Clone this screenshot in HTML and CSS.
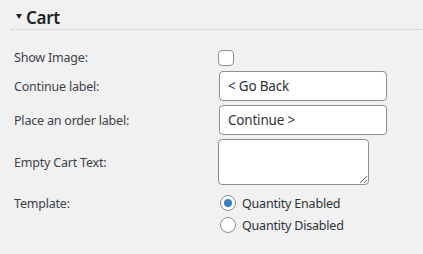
FILE: index.html
```html
<!DOCTYPE html>
<html lang="en">
<head>
    <meta charset="UTF-8">
    <meta name="viewport" content="width=device-width, initial-scale=1.0">
    <title>Cart Settings</title>
    <link rel="stylesheet" href="styles.css">
</head>
<body>
    <div class="settings">
        <!-- Section title -->
        <h3 class="section-title">
            <svg class="caret" width="6" height="5" viewBox="0 0 6 5"><polygon points="0,0 6,0 3,5" fill="#1d2327"/></svg>
            Cart
        </h3>

        <div class="rows">
            <div class="row row-check">
                <label class="row-label" for="show-image">Show Image:</label>
                <input type="checkbox" id="show-image" class="check">
            </div>

            <div class="row row-input">
                <label class="row-label" for="continue-label">Continue label:</label>
                <input type="text" id="continue-label" class="text-input" value="< Go Back">
            </div>

            <div class="row row-input">
                <label class="row-label" for="order-label">Place an order label:</label>
                <input type="text" id="order-label" class="text-input" value="Continue >">
            </div>

            <div class="row row-area">
                <label class="row-label" for="empty-text">Empty Cart Text:</label>
                <textarea id="empty-text" class="text-area"></textarea>
            </div>

            <div class="row row-radio">
                <span class="row-label">Template:</span>
                <div class="radio-group">
                    <label class="radio-item"><input type="radio" name="template" class="radio" checked> Quantity Enabled</label>
                    <label class="radio-item"><input type="radio" name="template" class="radio"> Quantity Disabled</label>
                </div>
            </div>
        </div>
    </div>
</body>
</html>
```

FILE: styles.css
```css
/* General Reset */
* {
    margin: 0;
    padding: 0;
    box-sizing: border-box;
}

body {
    font-family: 'Noto Sans', 'Open Sans', sans-serif;
    font-size: 12.5px;
    letter-spacing: -0.2px;
    background-color: #f1f1f1;
    color: #3c434a;
}

.settings {
    padding-top: 5px;
}

.section-title {
    display: flex;
    align-items: center;
    margin-left: 11px;
    padding-left: 5px;
    height: 25px;
    font-size: 17px;
    font-weight: 600;
    letter-spacing: -0.3px;
    color: #1d2327;
    border-bottom: 1px dotted #c3c4c7;
}

.caret {
    margin-right: 4px;
    margin-top: -1px;
}

.rows {
    padding-left: 14px;
    padding-top: 19px;
}

.row {
    display: flex;
    align-items: center;
}

.row-label {
    width: 204px;
    flex-shrink: 0;
}

.row-input {
    margin-top: 5px;
}

.row-input + .row-input {
    margin-top: 4px;
}

.row-area {
    margin-top: 4px;
}

.row-radio {
    margin-top: 10px;
    align-items: flex-start;
}

.row-radio .row-label {
    line-height: 18px;
}

.check {
    appearance: none;
    width: 16px;
    height: 16px;
    border: 1px solid #8c8f94;
    border-radius: 4px;
    background: #fff;
}

.text-input {
    width: 168px;
    height: 30px;
    margin-left: 1px;
    padding: 0 8px;
    border: 1px solid #8c8f94;
    border-radius: 4px;
    background: #fff;
    font-family: inherit;
    font-size: 13.5px;
    letter-spacing: -0.2px;
    color: #2c3338;
}

.text-area {
    width: 151px;
    height: 46px;
    padding: 2px 6px;
    border: 1px solid #8c8f94;
    border-radius: 4px;
    background: #fff;
    font-family: inherit;
    font-size: 14px;
    color: #2c3338;
}

.radio-group {
    display: flex;
    flex-direction: column;
    gap: 6px;
    margin-left: 2px;
}

.radio-item {
    display: flex;
    align-items: center;
    gap: 6px;
    height: 16px;
    line-height: 18px;
    padding-top: 1px;
    color: #2c3338;
}

.radio {
    appearance: none;
    flex-shrink: 0;
    width: 16px;
    height: 16px;
    margin-top: -1px;
    border: 1px solid #8c8f94;
    border-radius: 50%;
    background: #fff;
    display: flex;
    align-items: center;
    justify-content: center;
}

.radio:checked::before {
    content: "";
    width: 8px;
    height: 8px;
    border-radius: 50%;
    background: #3582c4;
}
```
